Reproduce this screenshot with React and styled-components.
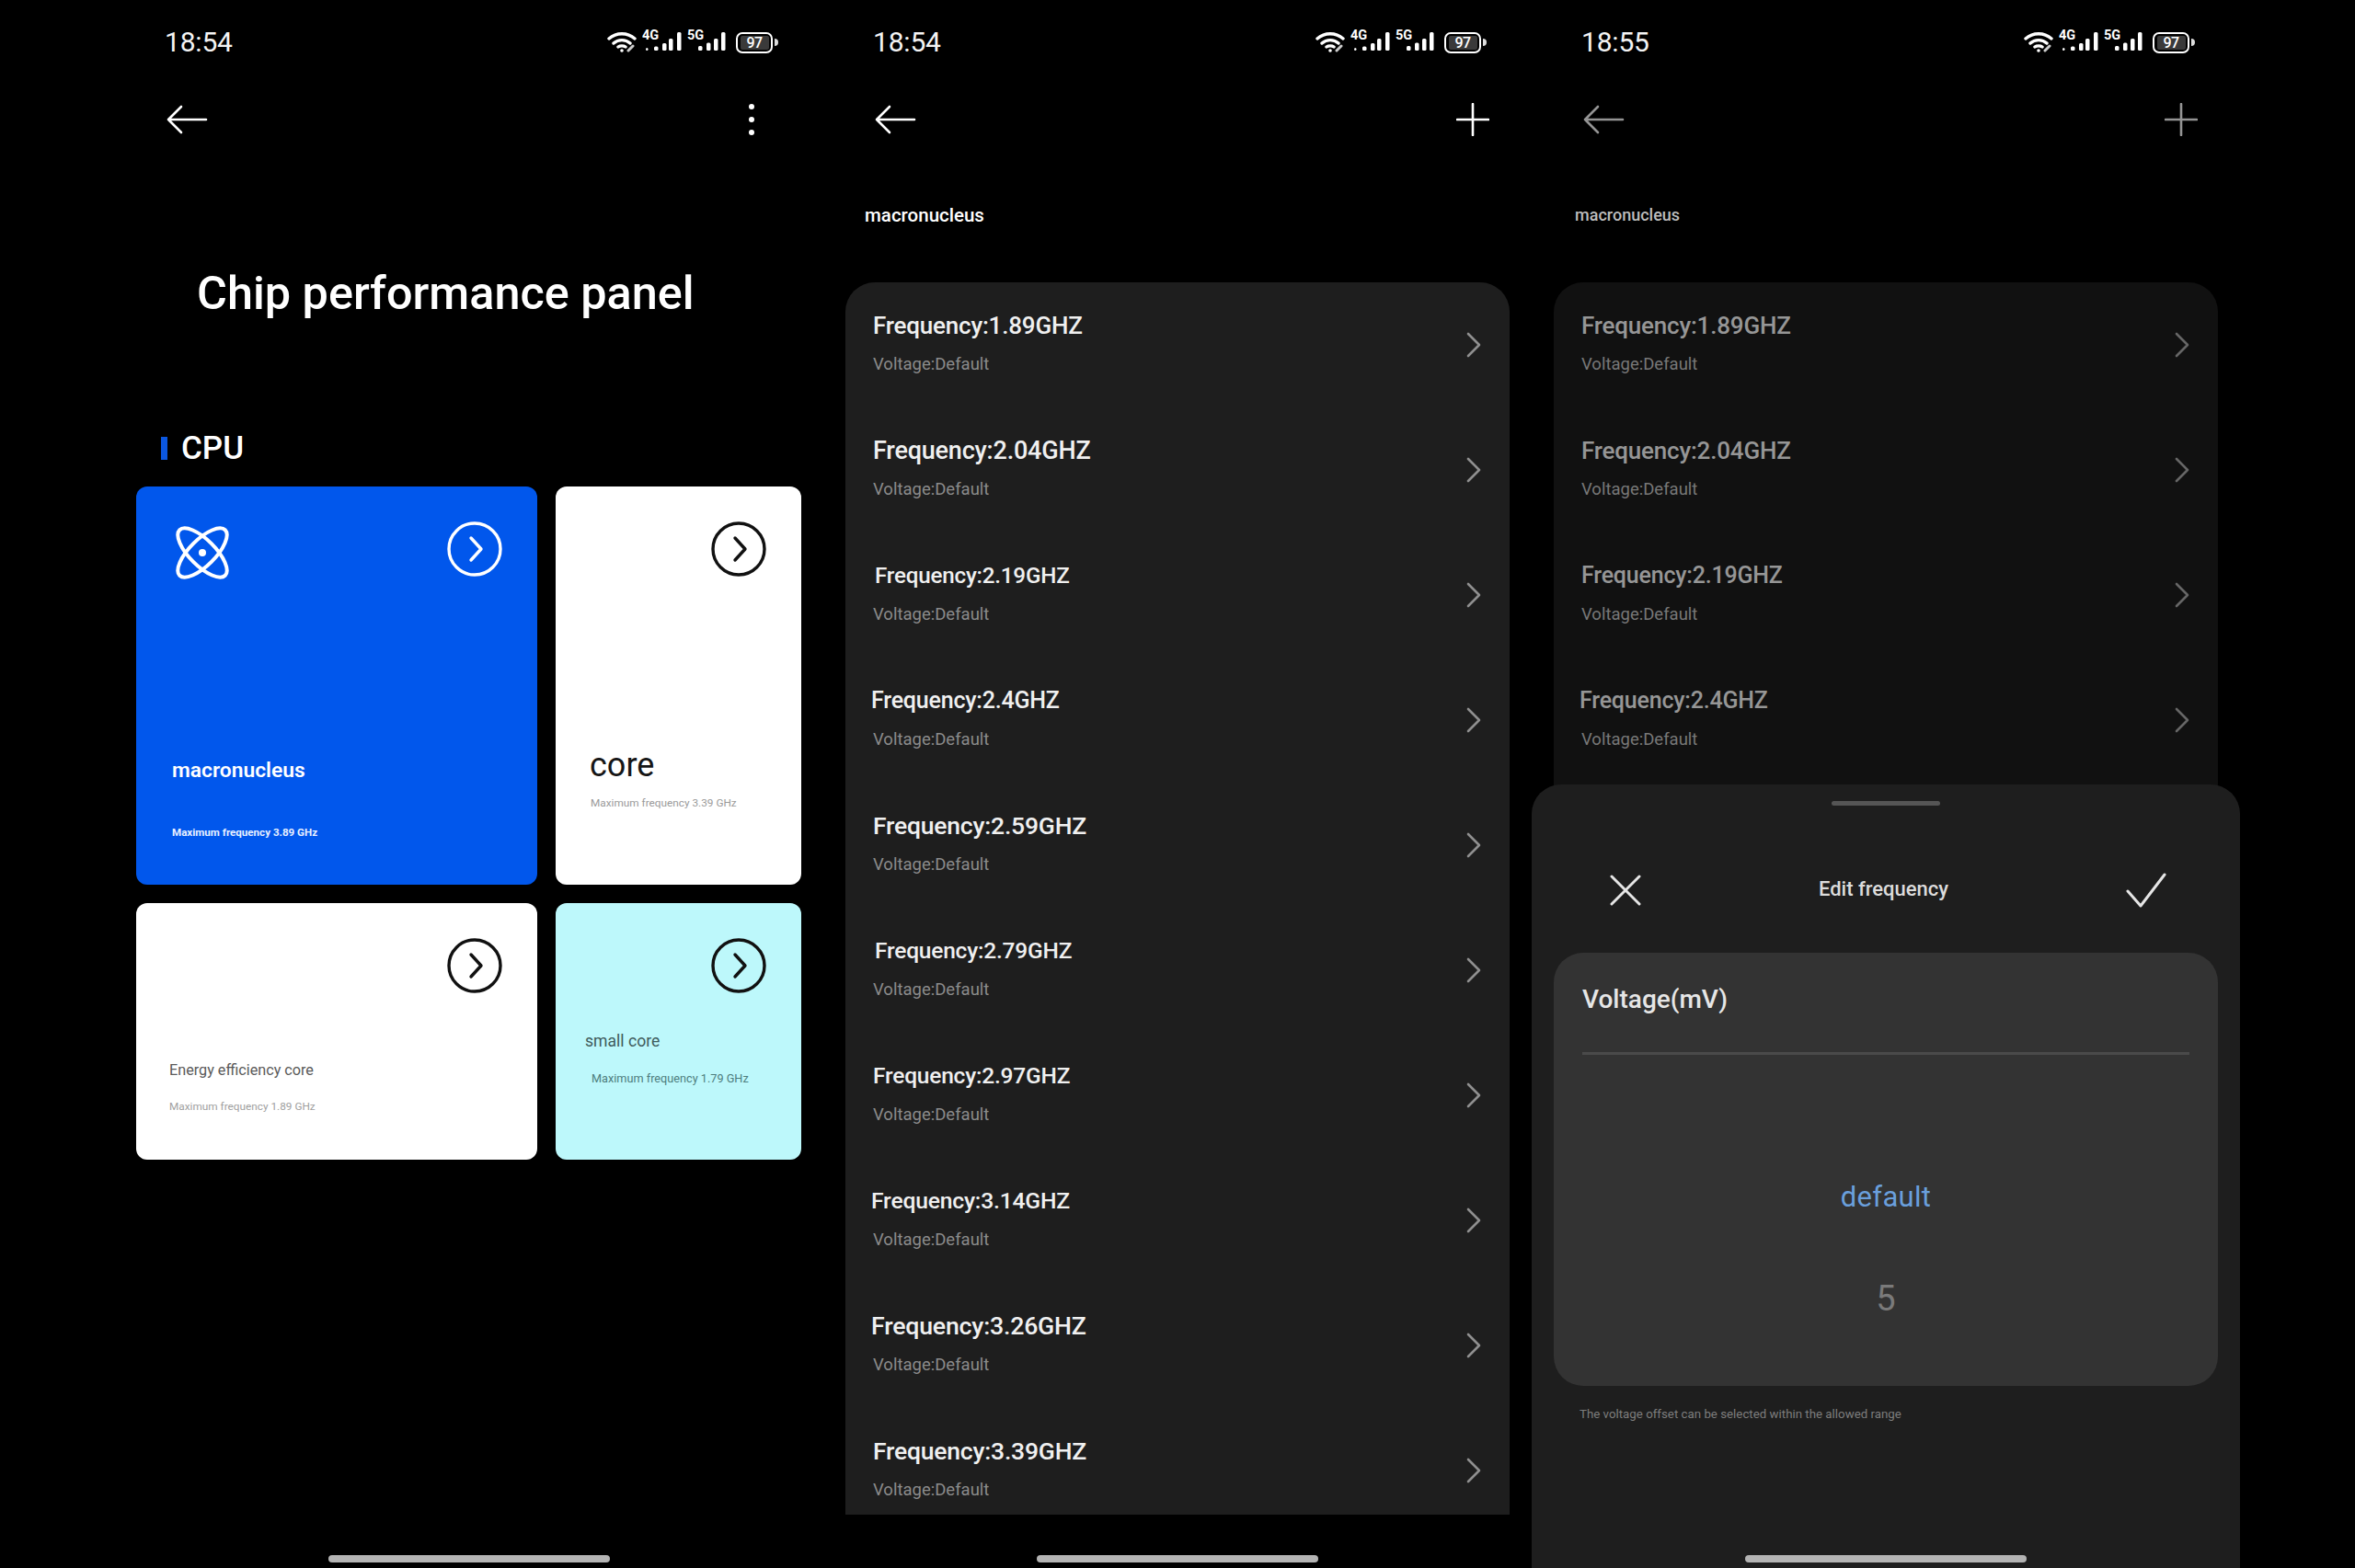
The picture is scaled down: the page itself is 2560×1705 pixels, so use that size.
import React from 'react';
import styled, { createGlobalStyle } from 'styled-components';

const Global = createGlobalStyle`
  html, body { margin: 0; padding: 0; background: #000; }
  body { font-family: Roboto, "Noto Sans", sans-serif; }
  * { box-sizing: border-box; }
`;

const Page = styled.div`
  width: 2560px; height: 1705px; padding: 0 125px;
  display: flex; background: #000; overflow: hidden;
`;
const Phone = styled.div`
  position: relative; width: 770px; height: 1705px;
  display: flex; flex-direction: column; flex: none;
`;
const StatusBar = styled.div`
  height: 46px; margin-top: 23px; padding: 0 49px 0 54px;
  display: flex; align-items: center; justify-content: space-between; color: #fff;
`;
const Time = styled.div`font-size: 30px; line-height: 44px; letter-spacing: -0.2px; color: #f4f4f4;`;
const StatusIcons = styled.div`display: flex; align-items: center; gap: 6px;`;
const Battery = styled.div`
  position: relative; width: 40px; height: 23px; margin-left: 4px; margin-right: 6px;
  border: 2.5px solid #fff; border-radius: 7px;
  display: flex; align-items: center; justify-content: center;
  &::after { content: ''; position: absolute; right: -8px; top: 5px; width: 4px; height: 8px; background: #ddd; border-radius: 0 4px 4px 0; }
`;
const BatteryLevel = styled.span`
  background: #3a3a3a; border-radius: 2px; width: 31px; height: 15px; font-size: 16px; line-height: 15px;
  font-weight: 500; text-align: center; color: #fff; letter-spacing: -0.5px;
`;
const Toolbar = styled.div`
  height: 60px; margin-top: 23px; padding: 16px 46px 0 55px;
  display: flex; align-items: center; justify-content: space-between;
  color: ${p => (p.$dim ? '#949494' : '#fff')};
`;
const DotsIcon = styled.svg`margin-right: 28px;`;
const Title = styled.h1`
  margin: 137px 0 0 89px; font-size: 50.4px; line-height: 60px; font-weight: 500; color: #fff; letter-spacing: 0;
`;
const SectionHead = styled.div`
  margin: 122px 0 0 50px; display: flex; align-items: center; gap: 15px;
  height: 32px; font-size: 35px; font-weight: 500; color: #fff;
  &::before { content: ''; width: 7px; height: 25px; background: #0b57e0; }
`;
const CardGrid = styled.div`
  margin: 26px 0 0 23px; display: grid; grid-template-columns: 436px 267px; grid-template-rows: 433px 279px; gap: 20px;
`;
const Card = styled.div`
  position: relative; border-radius: 12px; background: ${p => p.$bg}; color: ${p => p.$fg};
  display: flex; flex-direction: column;
  padding: ${p => p.$pad};
`;
const CardTop = styled.div`display: flex; justify-content: ${p => (p.$single ? 'flex-end' : 'space-between')}; align-items: flex-start;`;
const CardName = styled.div`
  margin-top: ${p => p.$mt}px; margin-left: ${p => p.$ml || 0}px; font-size: ${p => p.$size}px; font-weight: ${p => p.$w || 400}; line-height: 1.2; color: ${p => p.$c};
`;
const CardSub = styled.div`
  margin-top: ${p => p.$mt}px; margin-left: ${p => p.$ml || 0}px; font-size: ${p => p.$size || 11.8}px; font-weight: ${p => p.$w || 400}; line-height: 14px; color: ${p => p.$c}; white-space: nowrap;
`;
const SectionLabel = styled.div`
  margin: 67px 0 0 ${p => (p.$dim ? 47 : 45)}px; height: 30px; line-height: 30px; font-size: ${p => (p.$dim ? 18 : 20.5)}px;
  font-weight: 500; color: ${p => (p.$dim ? '#bdbdbd' : '#fff')};
`;
const ListPanel = styled.div`
  margin: 58px 0 0 24px; width: 722px; height: 1340px; overflow: hidden; border-radius: 32px 32px 0 0;
  background: ${p => (p.$dim ? '#111111' : '#1e1e1e')};
`;
const Row = styled.div`
  height: 136px; padding: 0 31px 0 30px; display: flex; align-items: center; justify-content: space-between;
`;
const RowText = styled.div`display: flex; flex-direction: column; margin-top: -6px;`;
const RowTitle = styled.div`
  font-size: ${p => p.$size}px; line-height: 32px; font-weight: 500; letter-spacing: -0.2px; margin-left: ${p => p.$dx}px;
  color: ${p => (p.$dim ? '#969696' : '#f0f0f0')};
`;
const RowSub = styled.div`
  margin-top: 15px; font-size: 18.5px; line-height: 22px; color: ${p => (p.$dim ? '#787878' : '#8b8b8b')};
`;
const Sheet = styled.div`
  position: absolute; left: 0; right: 0; top: 853px; bottom: 0; background: #1e1e1e; border-radius: 32px 32px 0 0;
  display: flex; flex-direction: column; align-items: center;
`;
const Handle = styled.div`width: 118px; height: 5px; margin-top: 18px; border-radius: 3px; background: #555;`;
const SheetHead = styled.div`
  width: 100%; height: 60px; margin-top: 62px; padding: 0 80px 0 85px; display: flex; align-items: center; justify-content: space-between;
`;
const SheetTitle = styled.div`font-size: 22px; font-weight: 500; color: #dcdcdc; margin-top: -3px;`;
const VoltCard = styled.div`
  width: 722px; height: 471px; margin-top: 38px; border-radius: 32px; background: #333; padding: 31px 31px 0;
  display: flex; flex-direction: column; align-items: center;
`;
const VoltTitle = styled.div`align-self: flex-start; font-size: 28px; line-height: 40px; font-weight: 500; color: #e6e6e6;`;
const Divider = styled.div`width: 100%; height: 3px; margin-top: 37px; background: #4a4a4a;`;
const PickValue = styled.div`
  margin-top: ${p => p.$mt}px; font-size: ${p => p.$size}px; line-height: 44px; color: ${p => p.$c}; letter-spacing: ${p => p.$ls || 0}px;
`;
const Hint = styled.div`align-self: flex-start; margin: 23px 0 0 52px; font-size: 13.3px; line-height: 16px; color: #7d7d7d;`;
const HomeBar = styled.div`
  position: absolute; left: 232px; bottom: 6px; width: 306px; height: 8px; border-radius: 4px; background: #b4b4b4;
`;

const BackArrow = () => (
  <svg width="46" height="32" viewBox="0 0 46 32" fill="none" stroke="currentColor" strokeWidth="2.6" strokeLinecap="round" strokeLinejoin="round">
    <path d="M44 16H3M17 2L3 16l14 14" />
  </svg>
);
const Dots = () => (
  <DotsIcon width="8" height="36" viewBox="0 0 8 36" fill="currentColor">
    <circle cx="4" cy="4" r="3" /><circle cx="4" cy="18" r="3" /><circle cx="4" cy="32" r="3" />
  </DotsIcon>
);
const Plus = () => (
  <svg width="36" height="36" viewBox="0 0 36 36" fill="none" stroke="currentColor" strokeWidth="2.6" strokeLinecap="round">
    <path d="M18 1v34M1 18h34" />
  </svg>
);
const Chevron = ({ dim }) => (
  <svg width="16" height="28" viewBox="0 0 16 28" fill="none" stroke={dim ? '#666' : '#8f8f8f'} strokeWidth="2.6" strokeLinecap="round" strokeLinejoin="round">
    <path d="M2 2l12 12L2 26" />
  </svg>
);
const CircleArrow = ({ color }) => (
  <svg width="60" height="60" viewBox="0 0 60 60" fill="none" stroke={color} strokeWidth="3.4" strokeLinecap="round" strokeLinejoin="round">
    <circle cx="30" cy="30" r="28" /><path d="M26 18l11 12-11 12" />
  </svg>
);
const AtomIcon = styled.svg`margin: 4px 0 0 3px;`;
const Atom = () => (
  <AtomIcon width="60" height="60" viewBox="0 0 60 60" fill="none" stroke="#fff" strokeWidth="4">
    <ellipse cx="30" cy="30" rx="35" ry="14" transform="rotate(45 30 30)" />
    <ellipse cx="30" cy="30" rx="35" ry="14" transform="rotate(-45 30 30)" />
    <circle cx="30" cy="30" r="4" fill="#fff" stroke="none" />
  </AtomIcon>
);
const Wifi = () => (
  <svg width="33" height="22" viewBox="0 0 33 22" fill="none" stroke="#fff" strokeWidth="3.4" strokeLinecap="round">
    <path d="M3 7c8-7 20-7 28 0M8 12c5-4.500 13-4.500 18 0M13 16c2-1.500 6-1.500 8 0" />
    <circle cx="17" cy="20" r="1.800" fill="#fff" stroke="none" />
    <path d="M24 20l5-5" stroke="#ccc" strokeWidth="3" />
  </svg>
);
const Signal = ({ label, bars }) => (
  <svg width="43" height="34" viewBox="0 0 43 34" fill="#fff">
    <text x="0" y="14" fontFamily="Roboto, sans-serif" fontSize="14.500" fontWeight="700">{label}</text>
    {bars.map(([x, h, w]) => (
      <rect key={x} x={x} y={26 - h} width={w || 4.5} height={h} rx="1.500" />
    ))}
  </svg>
);
const Close = () => (
  <svg width="34" height="34" viewBox="0 0 34 34" fill="none" stroke="#e6e6e6" strokeWidth="3" strokeLinecap="round">
    <path d="M2 2l30 30M32 2L2 32" />
  </svg>
);
const Check = () => (
  <svg width="44" height="38" viewBox="0 0 44 38" fill="none" stroke="#e6e6e6" strokeWidth="3" strokeLinecap="round" strokeLinejoin="round">
    <path d="M2 20l14 16L42 2" />
  </svg>
);

const Status = ({ time }) => (
  <StatusBar>
    <Time>{time}</Time>
    <StatusIcons>
      <Wifi />
      <Signal label="4G" bars={[[4, 3, 2.5], [13, 4.5], [22, 8], [29, 13], [38, 20]]} />
      <Signal label="5G" bars={[[12, 5], [21, 8.5], [29, 13], [37, 20]]} />
      <Battery><BatteryLevel>97</BatteryLevel></Battery>
    </StatusIcons>
  </StatusBar>
);

const freqs = [
  ['1.89', 0, 26], ['2.04', 0, 27, 26], ['2.19', 2, 24.2, 25, 0], ['2.4', -2, 25], ['2.59', 0, 26.5],
  ['2.79', 2, 24.500], ['2.97', 0, 24.500], ['3.14', -2, 24.700], ['3.26', -2, 26.700], ['3.39', 0, 26.500],
];

const FreqList = ({ dim }) => (
  <ListPanel $dim={dim}>
    {freqs.map(([f, dx, size, dimSize, dimDx]) => (
      <Row key={f}>
        <RowText>
          <RowTitle $dim={dim} $dx={dim && dimDx !== undefined ? dimDx : dx} $size={dim && dimSize ? dimSize : size}>Frequency:{f}GHZ</RowTitle>
          <RowSub $dim={dim}>Voltage:Default</RowSub>
        </RowText>
        <Chevron dim={dim} />
      </Row>
    ))}
  </ListPanel>
);

export default function App() {
  return (
    <Page>
      <Global />
      <Phone>
        <Status time="18:54" />
        <Toolbar><BackArrow /><Dots /></Toolbar>
        <Title>Chip performance panel</Title>
        <SectionHead>CPU</SectionHead>
        <CardGrid>
          <Card $bg="#0157ec" $fg="#fff" $pad="38px 38px 0 39px">
            <CardTop><Atom /><CircleArrow color="#fff" /></CardTop>
            <CardName $mt={193} $size={22.800} $w={600} $c="#fff">macronucleus</CardName>
            <CardSub $mt={47} $size={11.600} $w={700} $c="#e8f0ff">Maximum frequency 3.89 GHz</CardSub>
          </Card>
          <Card $bg="#fff" $pad="38px 38px 0 37px">
            <CardTop $single><CircleArrow color="#111" /></CardTop>
            <CardName $mt={184} $size={36} $c="#161616">core</CardName>
            <CardSub $mt={12} $ml={1} $c="#9a9a9a">Maximum frequency 3.39 GHz</CardSub>
          </Card>
          <Card $bg="#fff" $pad="38px 38px 0 36px">
            <CardTop $single><CircleArrow color="#111" /></CardTop>
            <CardName $mt={74} $size={16.200} $c="#5a5a5a">Energy efficiency core</CardName>
            <CardSub $mt={23} $c="#a0a0a0">Maximum frequency 1.89 GHz</CardSub>
          </Card>
          <Card $bg="#bdf8fb" $pad="38px 38px 0 32px">
            <CardTop $single><CircleArrow color="#111" /></CardTop>
            <CardName $mt={42} $size={17.600} $c="#3f5c5c">small core</CardName>
            <CardSub $mt={23} $ml={7} $size={12.700} $c="#4d7d7d">Maximum frequency 1.79 GHz</CardSub>
          </Card>
        </CardGrid>
        <HomeBar />
      </Phone>
      <Phone>
        <Status time="18:54" />
        <Toolbar><BackArrow /><Plus /></Toolbar>
        <SectionLabel>macronucleus</SectionLabel>
        <FreqList />
        <HomeBar />
      </Phone>
      <Phone>
        <Status time="18:55" />
        <Toolbar $dim><BackArrow /><Plus /></Toolbar>
        <SectionLabel $dim>macronucleus</SectionLabel>
        <FreqList dim />
        <Sheet>
          <Handle />
          <SheetHead>
            <Close />
            <SheetTitle>Edit frequency</SheetTitle>
            <Check />
          </SheetHead>
          <VoltCard>
            <VoltTitle>Voltage(mV)</VoltTitle>
            <Divider />
            <PickValue $mt={133} $size={31} $c="#6a9fdc" $ls={0.3}>default</PickValue>
            <PickValue $mt={66} $size={38} $c="#7a7a7a">5</PickValue>
          </VoltCard>
          <Hint>The voltage offset can be selected within the allowed range</Hint>
        </Sheet>
        <HomeBar />
      </Phone>
    </Page>
  );
}
